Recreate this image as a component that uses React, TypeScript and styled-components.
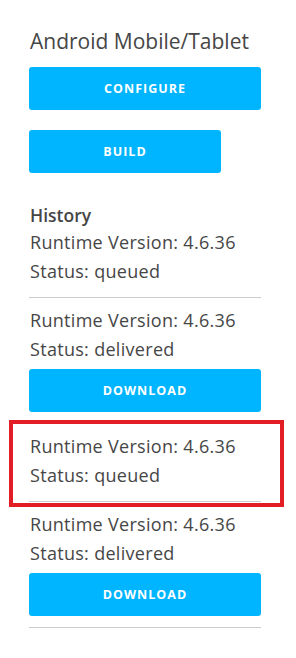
import styled, { createGlobalStyle } from "styled-components";

const GlobalStyle = createGlobalStyle`
  body {
    margin: 0;
    background: #ffffff;
    font-family: "Open Sans", Lato, sans-serif;
    color: #464646;
  }
`;

type Build = {
  version: string;
  status: string;
  highlighted?: boolean;
};

const history: Build[] = [
  { version: "4.6.36", status: "queued" },
  { version: "4.6.36", status: "delivered" },
  { version: "4.6.36", status: "queued", highlighted: true },
  { version: "4.6.36", status: "delivered" },
];

export default function App() {
  return (
    <>
      <GlobalStyle />
      <Panel>
        <Title>Android Mobile/Tablet</Title>
        <ActionButton>Configure</ActionButton>
        <ActionButton $narrow>Build</ActionButton>
        <HistoryTitle>History</HistoryTitle>
        <HistoryList>
          {history.map((item, i) => (
            <HistoryItem key={i}>
              <Line>Runtime Version: {item.version}</Line>
              <Line>Status: {item.status}</Line>
              {item.status === "delivered" && <DownloadButton>Download</DownloadButton>}
              {item.highlighted && <Highlight />}
            </HistoryItem>
          ))}
        </HistoryList>
      </Panel>
    </>
  );
}

const Panel = styled.div`
  display: flex;
  flex-direction: column;
  align-items: flex-start;
  width: 232px;
  padding: 29px 0 0 29px;
`;

const Title = styled.h2`
  margin: 0 0 14px 1px;
  font-size: 21px;
  line-height: 24px;
  font-weight: 400;
  color: #464646;
`;

const ActionButton = styled.button<{ $narrow?: boolean }>`
  width: ${(p) => (p.$narrow ? "192px" : "232px")};
  height: 43px;
  margin-bottom: 20px;
  border: none;
  border-radius: 3px;
  background: #00b5ff;
  color: #ffffff;
  font-family: "Open Sans", Lato, sans-serif;
  font-size: 12.5px;
  font-weight: 700;
  letter-spacing: 1px;
  text-transform: uppercase;
`;

const DownloadButton = styled(ActionButton)`
  margin: 5px 0 0;
`;

const HistoryTitle = styled.h3`
  margin: 10px 0 0 1px;
  font-size: 17.5px;
  line-height: 24px;
  font-weight: 600;
  color: #464646;
`;

const HistoryList = styled.div`
  display: flex;
  flex-direction: column;
  width: 232px;
`;

const HistoryItem = styled.div`
  position: relative;
  display: flex;
  flex-direction: column;
  padding: 8px 0 11px;
  border-bottom: 1px solid #cccccc;

  &:first-child {
    padding-top: 1px;
  }
`;

const Line = styled.div`
  padding-left: 1px;
  font-size: 18px;
  line-height: 29px;
  letter-spacing: 0.3px;
`;

const Highlight = styled.div`
  position: absolute;
  top: -4px;
  left: -20px;
  right: -23px;
  bottom: -6px;
  border: 4px solid #e21d25;
  pointer-events: none;
`;
